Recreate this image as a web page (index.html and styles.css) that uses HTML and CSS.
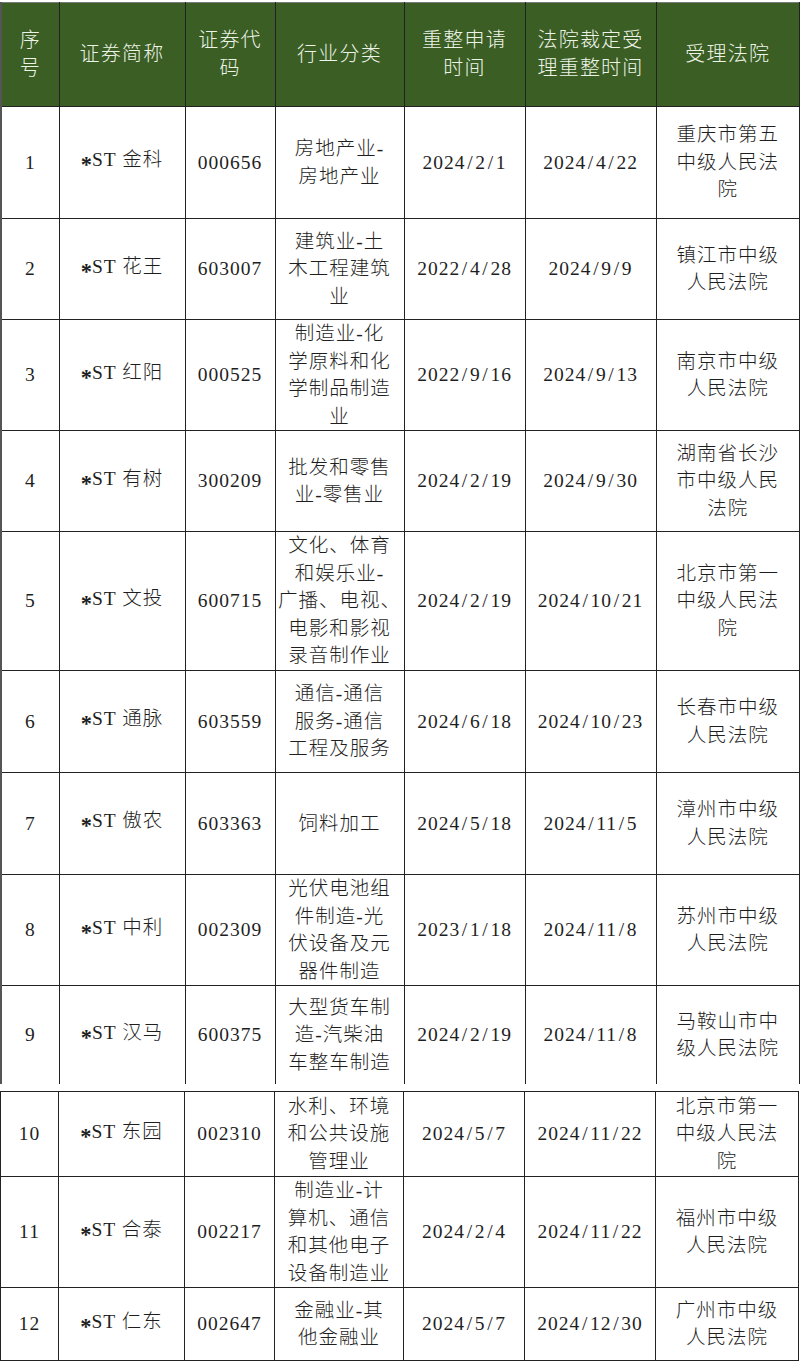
FILE: index.html
```html
<!DOCTYPE html>
<html lang="zh-CN">
<head>
<meta charset="utf-8">
<title>*ST 公司重整情况</title>
<link rel="stylesheet" href="styles.css">
</head>
<body>
<table class="grid part1">
  <colgroup>
    <col class="c1"><col class="c2"><col class="c3"><col class="c4"><col class="c5"><col class="c6"><col class="c7">
  </colgroup>
  <thead>
    <tr class="head">
      <th>序<br>号</th>
      <th>证券简称</th>
      <th>证券代<br>码</th>
      <th>行业分类</th>
      <th>重整申请<br>时间</th>
      <th>法院裁定受<br>理重整时间</th>
      <th>受理法院</th>
    </tr>
  </thead>
  <tbody>
    <tr class="h112">
      <td>1</td><td><span class="ast">*</span>ST 金科</td><td>000656</td>
      <td>房地产业-<br>房地产业</td>
      <td>2024<span class="sl">/</span>2<span class="sl">/</span>1</td>
      <td>2024<span class="sl">/</span>4<span class="sl">/</span>22</td>
      <td>重庆市第五<br>中级人民法<br>院</td>
    </tr>
    <tr class="h101">
      <td>2</td><td><span class="ast">*</span>ST 花王</td><td>603007</td>
      <td>建筑业-土<br>木工程建筑<br>业</td>
      <td>2022<span class="sl">/</span>4<span class="sl">/</span>28</td>
      <td>2024<span class="sl">/</span>9<span class="sl">/</span>9</td>
      <td>镇江市中级<br>人民法院</td>
    </tr>
    <tr class="h111">
      <td>3</td><td><span class="ast">*</span>ST 红阳</td><td>000525</td>
      <td>制造业-化<br>学原料和化<br>学制品制造<br>业</td>
      <td>2022<span class="sl">/</span>9<span class="sl">/</span>16</td>
      <td>2024<span class="sl">/</span>9<span class="sl">/</span>13</td>
      <td>南京市中级<br>人民法院</td>
    </tr>
    <tr class="h101">
      <td>4</td><td><span class="ast">*</span>ST 有树</td><td>300209</td>
      <td>批发和零售<br>业-零售业</td>
      <td>2024<span class="sl">/</span>2<span class="sl">/</span>19</td>
      <td>2024<span class="sl">/</span>9<span class="sl">/</span>30</td>
      <td>湖南省长沙<br>市中级人民<br>法院</td>
    </tr>
    <tr class="h139">
      <td>5</td><td><span class="ast">*</span>ST 文投</td><td>600715</td>
      <td>文化、体育<br>和娱乐业-<br>广播、电视、<br>电影和影视<br>录音制作业</td>
      <td>2024<span class="sl">/</span>2<span class="sl">/</span>19</td>
      <td>2024<span class="sl">/</span>10<span class="sl">/</span>21</td>
      <td>北京市第一<br>中级人民法<br>院</td>
    </tr>
    <tr class="h102">
      <td>6</td><td><span class="ast">*</span>ST 通脉</td><td>603559</td>
      <td>通信-通信<br>服务-通信<br>工程及服务</td>
      <td>2024<span class="sl">/</span>6<span class="sl">/</span>18</td>
      <td>2024<span class="sl">/</span>10<span class="sl">/</span>23</td>
      <td>长春市中级<br>人民法院</td>
    </tr>
    <tr class="h102">
      <td>7</td><td><span class="ast">*</span>ST 傲农</td><td>603363</td>
      <td>饲料加工</td>
      <td>2024<span class="sl">/</span>5<span class="sl">/</span>18</td>
      <td>2024<span class="sl">/</span>11<span class="sl">/</span>5</td>
      <td>漳州市中级<br>人民法院</td>
    </tr>
    <tr class="h111">
      <td>8</td><td><span class="ast">*</span>ST 中利</td><td>002309</td>
      <td>光伏电池组<br>件制造-光<br>伏设备及元<br>器件制造</td>
      <td>2023<span class="sl">/</span>1<span class="sl">/</span>18</td>
      <td>2024<span class="sl">/</span>11<span class="sl">/</span>8</td>
      <td>苏州市中级<br>人民法院</td>
    </tr>
    <tr class="h99 last">
      <td>9</td><td><span class="ast">*</span>ST 汉马</td><td>600375</td>
      <td>大型货车制<br>造-汽柴油<br>车整车制造</td>
      <td>2024<span class="sl">/</span>2<span class="sl">/</span>19</td>
      <td>2024<span class="sl">/</span>11<span class="sl">/</span>8</td>
      <td>马鞍山市中<br>级人民法院</td>
    </tr>
  </tbody>
</table>
<table class="grid part2">
  <colgroup>
    <col class="c1"><col class="c2"><col class="c3"><col class="c4"><col class="c5"><col class="c6"><col class="c7">
  </colgroup>
  <tbody>
    <tr class="h85">
      <td>10</td><td><span class="ast">*</span>ST 东园</td><td>002310</td>
      <td>水利、环境<br>和公共设施<br>管理业</td>
      <td>2024<span class="sl">/</span>5<span class="sl">/</span>7</td>
      <td>2024<span class="sl">/</span>11<span class="sl">/</span>22</td>
      <td>北京市第一<br>中级人民法<br>院</td>
    </tr>
    <tr class="h110">
      <td>11</td><td><span class="ast">*</span>ST 合泰</td><td>002217</td>
      <td>制造业-计<br>算机、通信<br>和其他电子<br>设备制造业</td>
      <td>2024<span class="sl">/</span>2<span class="sl">/</span>4</td>
      <td>2024<span class="sl">/</span>11<span class="sl">/</span>22</td>
      <td>福州市中级<br>人民法院</td>
    </tr>
    <tr class="h72">
      <td>12</td><td><span class="ast">*</span>ST 仁东</td><td>002647</td>
      <td>金融业-其<br>他金融业</td>
      <td>2024<span class="sl">/</span>5<span class="sl">/</span>7</td>
      <td>2024<span class="sl">/</span>12<span class="sl">/</span>30</td>
      <td>广州市中级<br>人民法院</td>
    </tr>
  </tbody>
</table>
</body>
</html>
```

FILE: styles.css
```css
html, body {
  margin: 0;
  padding: 0;
  background: #ffffff;
}

body {
  font-family: "Liberation Serif", "Noto Sans CJK SC", serif;
  font-size: 19.5px;
  letter-spacing: 1px;
  color: #1e1e1e;
}

.grid {
  border-collapse: collapse;
  table-layout: fixed;
}

.part1 {
  width: 800px;
  margin-top: 2px;
  border-top: 1px solid #7a7a7a;
  border-left: 2px solid #555555;
  border-right: 1px solid #333333;
}

.part2 {
  width: 799px;
  margin-top: 7px;
  border: 1px solid #2a2a2a;
}

.c1 { width: 58px; }
.c2 { width: 126px; }
.c3 { width: 90px; }
.c4 { width: 129px; }
.c5 { width: 121px; }
.c6 { width: 131px; }
.c7 { width: auto; }

.grid th,
.grid td {
  padding: 0 1px;
  border: 1px solid #222222;
  text-align: center;
  vertical-align: middle;
  line-height: 27.5px;
  white-space: nowrap;
}

.grid th {
  background: #3a5e23;
  color: #eef3e8;
  font-weight: 300;
  height: 103px;
  font-size: 20px;
  letter-spacing: 1.2px;
}

.grid td {
  font-weight: 300;
}

.part1 .head th {
  border-top: 1px solid #7a7a7a;
}

.part1 tr.last td {
  border-bottom: none;
}

.sl {
  display: inline-block;
  width: 0.5em;
  text-align: center;
}

.ast {
  font-weight: 700;
  font-size: 1.15em;
  vertical-align: -0.25em;
  letter-spacing: 0;
}

.h72 td { height: 72px; }
.h85 td { height: 84px; }
.h99 td { height: 98px; }
.h101 td { height: 100px; }
.h102 td { height: 101px; }
.h110 td { height: 107px; }
.h111 td { height: 110px; }
.h112 td { height: 111px; }
.h139 td { height: 138px; }
```
